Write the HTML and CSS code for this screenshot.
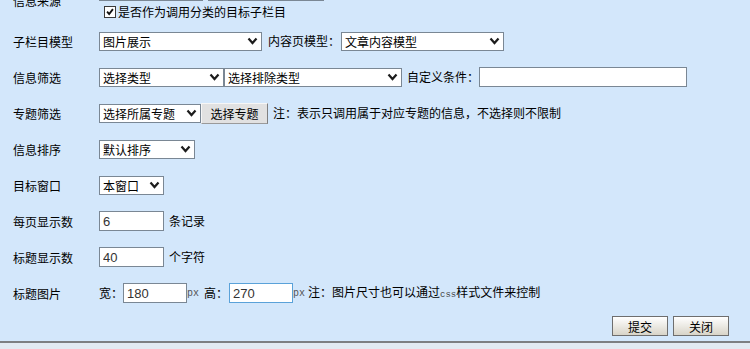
FILE: index.html
```html
<!DOCTYPE html>
<html lang="zh-CN">
<head>
  <meta charset="UTF-8">
  <title>信息调用设置</title>
  <link rel="stylesheet" href="styles.css">
</head>
<body>
  <form class="panel">
    <div class="row tall">
      <div class="label">信息来源</div>
      <div class="field stack">
        <div class="line">
          <span class="sel"><select class="w104"><option></option></select><svg class="arrow" viewBox="0 0 11 8"><polyline points="1.5,1.5 5.5,6 9.5,1.5"/></svg></span>
          <span class="sel gap5"><select class="w116"><option></option></select><svg class="arrow" viewBox="0 0 11 8"><polyline points="1.5,1.5 5.5,6 9.5,1.5"/></svg></span>
        </div>
        <label class="check">
          <span class="box"><svg viewBox="0 0 12 12"><polyline points="2.5,5.5 5,8.5 9.5,2.5"/></svg></span>
          是否作为调用分类的目标子栏目
        </label>
      </div>
    </div>

    <div class="row">
      <div class="label">子栏目模型</div>
      <div class="field">
        <span class="sel"><select class="w163"><option>图片展示</option></select><svg class="arrow" viewBox="0 0 11 8"><polyline points="1.5,1.5 5.5,6 9.5,1.5"/></svg></span>
        <span class="txt ml6 mr1">内容页模型：</span>
        <span class="sel"><select class="w163"><option>文章内容模型</option></select><svg class="arrow" viewBox="0 0 11 8"><polyline points="1.5,1.5 5.5,6 9.5,1.5"/></svg></span>
      </div>
    </div>

    <div class="row">
      <div class="label">信息筛选</div>
      <div class="field">
        <span class="sel"><select class="w125"><option>选择类型</option></select><svg class="arrow" viewBox="0 0 11 8"><polyline points="1.5,1.5 5.5,6 9.5,1.5"/></svg></span>
        <span class="sel"><select class="w178"><option>选择排除类型</option></select><svg class="arrow" viewBox="0 0 11 8"><polyline points="1.5,1.5 5.5,6 9.5,1.5"/></svg></span>
        <span class="txt ml5">自定义条件：</span>
        <input type="text" class="text w208">
      </div>
    </div>

    <div class="row">
      <div class="label">专题筛选</div>
      <div class="field">
        <span class="sel"><select class="w102"><option>选择所属专题</option></select><svg class="arrow" viewBox="0 0 11 8"><polyline points="1.5,1.5 5.5,6 9.5,1.5"/></svg></span>
        <button type="button" class="pick">选择专题</button>
        <span class="txt ml5">注：表示只调用属于对应专题的信息，不选择则不限制</span>
      </div>
    </div>

    <div class="row">
      <div class="label">信息排序</div>
      <div class="field">
        <span class="sel"><select class="w96"><option>默认排序</option></select><svg class="arrow" viewBox="0 0 11 8"><polyline points="1.5,1.5 5.5,6 9.5,1.5"/></svg></span>
      </div>
    </div>

    <div class="row">
      <div class="label">目标窗口</div>
      <div class="field">
        <span class="sel"><select class="w65"><option>本窗口</option></select><svg class="arrow" viewBox="0 0 11 8"><polyline points="1.5,1.5 5.5,6 9.5,1.5"/></svg></span>
      </div>
    </div>

    <div class="row">
      <div class="label">每页显示数</div>
      <div class="field">
        <input type="text" class="text w65" value="6">
        <span class="txt ml5">条记录</span>
      </div>
    </div>

    <div class="row">
      <div class="label">标题显示数</div>
      <div class="field">
        <input type="text" class="text w65" value="40">
        <span class="txt ml5">个字符</span>
      </div>
    </div>

    <div class="row">
      <div class="label">标题图片</div>
      <div class="field">
        <span class="txt">宽：</span>
        <input type="text" class="text w64" value="180">
        <span class="unit">px</span>
        <span class="txt ml5 mr1">高：</span>
        <input type="text" class="text w64 active" value="270">
        <span class="unit">px</span>
        <span class="txt ml3">注：图片尺寸也可以通过<span class="mono">css</span>样式文件来控制</span>
      </div>
    </div>

    <div class="actions">
      <button type="submit" class="btn">提交</button>
      <button type="button" class="btn">关闭</button>
    </div>
    <div class="strip"></div>
  </form>
</body>
</html>
```

FILE: styles.css
```css
* {
  box-sizing: border-box;
}
body {
  margin: 0;
  background-color: #d3e7fb;
  font-family: "Noto Sans CJK SC", sans-serif;
  font-size: 12px;
  color: #000;
  overflow: hidden;
}
.panel {
  margin-top: -22px;
}
.row {
  display: grid;
  grid-template-columns: 99px 1fr;
  align-items: center;
  height: 36px;
}
.row.tall {
  height: 45px;
}
.label {
  padding-left: 13px;
  white-space: nowrap;
}
.field {
  display: flex;
  align-items: center;
  white-space: nowrap;
}
.stack {
  flex-direction: column;
  align-items: flex-start;
  gap: 3px;
}
.line {
  display: flex;
  align-items: center;
}
.txt {
  line-height: 16px;
}

/* select with drawn arrow */
.sel {
  position: relative;
  display: inline-flex;
}
select {
  appearance: none;
  -webkit-appearance: none;
  height: 19px;
  margin: 0;
  padding: 0 3px;
  border: 1px solid #7a8794;
  border-radius: 0;
  background-color: #fff;
  font-family: inherit;
  font-size: 12px;
  color: #000;
  line-height: 17px;
}
.arrow {
  position: absolute;
  right: 4px;
  top: 5px;
  width: 11px;
  height: 8px;
  pointer-events: none;
}
.arrow polyline {
  fill: none;
  stroke: #1c1c1c;
  stroke-width: 2.2;
}

.text {
  height: 20px;
  margin: 0;
  padding: 0 3px;
  border: 1px solid #7a8794;
  border-radius: 0;
  background-color: #fff;
  font-family: "Liberation Sans", sans-serif;
  font-size: 13px;
  color: #333;
}
.text.active {
  border-color: #5aa2d9;
}
.unit {
  font-family: "Liberation Mono", monospace;
  font-size: 10px;
  color: #555;
  width: 12px;
}
.mono {
  font-family: "Liberation Mono", monospace;
  font-size: 9px;
  color: #444;
}

/* checkbox */
.check {
  display: flex;
  align-items: center;
  margin-left: 5px;
  line-height: 16px;
}
.box {
  display: inline-flex;
  width: 12px;
  height: 12px;
  margin-right: 2px;
  border: 1px solid #3a3a3a;
  background-color: #fff;
}
.box svg {
  width: 10px;
  height: 10px;
}
.box polyline {
  fill: none;
  stroke: #111;
  stroke-width: 2.2;
}

/* buttons */
.pick {
  width: 67px;
  height: 21px;
  margin: 0;
  padding: 0;
  border: 1px solid;
  border-color: #f6f6f6 #7f7f7f #9a9a9a #f6f6f6;
  border-radius: 0;
  background-color: #e1e1e1;
  font-family: inherit;
  font-size: 12px;
  color: #000;
}
.actions {
  display: flex;
  justify-content: flex-end;
  align-items: center;
  gap: 5px;
  height: 32px;
  padding-right: 21px;
  border-bottom: 2px solid #7d7f82;
}
.btn {
  width: 56px;
  height: 20px;
  margin: 0;
  padding: 0;
  border: 1px solid #6e6e6e;
  border-radius: 0;
  background: linear-gradient(#ffffff, #d8d4c8);
  font-family: inherit;
  font-size: 12px;
  color: #000;
}
.strip {
  height: 10px;
  background-color: #e2eaf2;
}

/* widths and gaps */
.w64 { width: 64px; }
.w65 { width: 65px; }
.w96 { width: 96px; }
.w102 { width: 102px; }
.w104 { width: 104px; }
.w116 { width: 116px; }
.w125 { width: 125px; }
.w163 { width: 163px; }
.w178 { width: 178px; }
.w208 { width: 208px; }
.gap5 { margin-left: 5px; }
.ml3 { margin-left: 3px; }
.ml5 { margin-left: 5px; }
.ml6 { margin-left: 6px; }
.mr1 { margin-right: 1px; }
```
